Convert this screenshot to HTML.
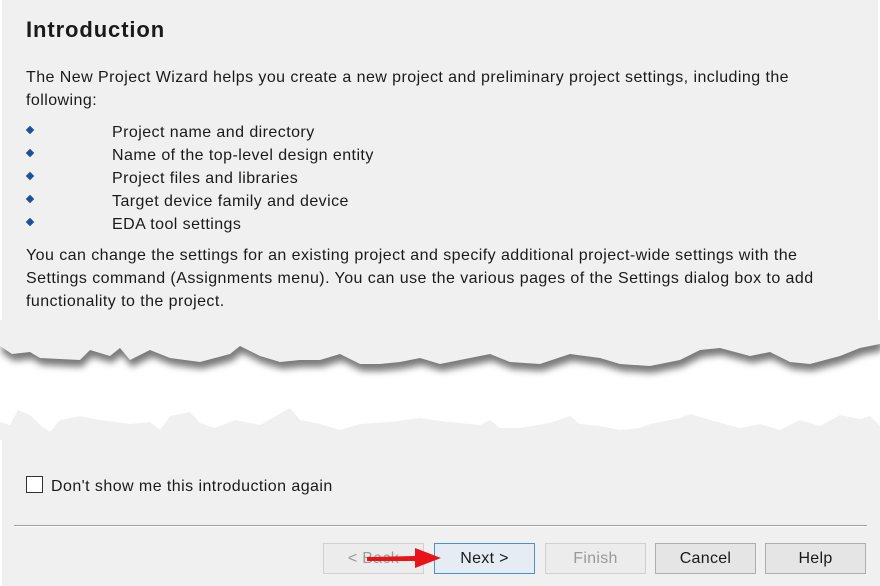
<!DOCTYPE html>
<html><head><style>
body{margin:0;width:880px;height:586px;background:#f0f0f0;font-family:"Liberation Sans",sans-serif;color:#1a1a1a;position:relative;overflow:hidden}
.t{position:absolute;white-space:nowrap;font-size:16px;letter-spacing:0.44px}
h1{position:absolute;left:26px;top:17px;margin:0;font-size:22px;font-weight:bold;letter-spacing:0.9px}
.b{position:absolute;left:27px;width:6px;height:6px;background:#1f4e9a;transform:rotate(45deg)}
.btn{position:absolute;top:543px;height:31px;width:101px;border:1px solid #adadad;background:#e5e5e5;font-size:16px;text-align:center;line-height:29px;box-sizing:border-box;letter-spacing:0.3px}
</style></head><body>
<div style="position:absolute;left:0;top:0;width:2px;height:586px;background:#fff"></div>
<div style="position:absolute;right:0;top:0;width:2px;height:350px;background:#fff"></div>
<h1>Introduction</h1>
<div class="t" style="left:26px;top:69px">The New Project Wizard helps you create a new project and preliminary project settings, including the</div>
<div class="t" style="left:26px;top:92px">following:</div>
<div class="b" style="top:127px"></div><div class="t" style="left:112px;top:124px">Project name and directory</div>
<div class="b" style="top:150px"></div><div class="t" style="left:112px;top:147px">Name of the top-level design entity</div>
<div class="b" style="top:173px"></div><div class="t" style="left:112px;top:170px">Project files and libraries</div>
<div class="b" style="top:196px"></div><div class="t" style="left:112px;top:193px">Target device family and device</div>
<div class="b" style="top:219px"></div><div class="t" style="left:112px;top:216px">EDA tool settings</div>
<div class="t" style="left:26px;top:247px">You can change the settings for an existing project and specify additional project-wide settings with the</div>
<div class="t" style="left:26px;top:270px">Settings command (Assignments menu). You can use the various pages of the Settings dialog box to add</div>
<div class="t" style="left:26px;top:293px">functionality to the project.</div>
<svg style="position:absolute;left:0;top:320px" width="880" height="120">
<defs><filter id="f" x="-5%" y="-50%" width="110%" height="200%"><feGaussianBlur stdDeviation="3.5"/></filter></defs>
<rect x="0" y="0" width="880" height="120" fill="#fff"/>
<polygon filter="url(#f)" fill="#7a7a7a" transform="translate(2,7)" points="0,0 880,0 880,24 860,28 840,36 810,44 790,42 770,32 750,36 720,28 700,30 680,40 650,46 620,44 600,38 570,34 540,44 510,42 490,34 470,38 440,44 420,38 400,42 380,44 360,44 340,34 320,40 300,40 280,42 260,36 240,26 230,34 200,42 170,38 150,30 130,40 120,28 110,36 90,30 80,40 40,38 30,32 12,34 0,26"/>
<polygon fill="#f0f0f0" points="0,0 880,0 880,24 860,28 840,36 810,44 790,42 770,32 750,36 720,28 700,30 680,40 650,46 620,44 600,38 570,34 540,44 510,42 490,34 470,38 440,44 420,38 400,42 380,44 360,44 340,34 320,40 300,40 280,42 260,36 240,26 230,34 200,42 170,38 150,30 130,40 120,28 110,36 90,30 80,40 40,38 30,32 12,34 0,26"/>
<polygon fill="#f0f0f0" points="0,102 10,105 18,90 30,95 40,105 50,112 60,100 80,96 100,100 130,104 150,102 160,110 170,96 190,92 200,103 215,108 235,100 260,105 290,88 300,100 320,104 340,110 360,104 390,102 420,98 440,101 480,105 490,100 500,108 520,108 550,103 570,96 580,104 600,106 620,110 640,108 650,104 680,98 690,94 710,100 740,108 760,104 780,110 800,100 820,106 840,95 860,99 870,96 880,106 880,120 0,120"/>
</svg>
<div style="position:absolute;left:26px;top:476px;width:17px;height:17px;border:1px solid #333;background:#fff;box-sizing:border-box"></div>
<div class="t" style="left:51px;top:478px">Don't show me this introduction again</div>
<div style="position:absolute;left:14px;top:525px;width:853px;height:1px;background:#a0a0a0"></div>
<div style="position:absolute;left:14px;top:526px;width:853px;height:1px;background:#fff"></div>
<div class="btn" style="left:323px;color:#9a9a9a;border-color:#d0d0d0;background:#ececec">&lt; Back</div>
<div class="btn" style="left:434px;border-color:#4a90d9;background:#e5ecf4">Next &gt;</div>
<div class="btn" style="left:545px;color:#9a9a9a;border-color:#d0d0d0;background:#ececec">Finish</div>
<div class="btn" style="left:655px">Cancel</div>
<div class="btn" style="left:765px">Help</div>
<svg style="position:absolute;left:365px;top:545px" width="80" height="28"><polygon points="2,12 50,11 50,3 76,13 50,23 50,16 2,16" fill="#e8141a"/></svg>
</body></html>
